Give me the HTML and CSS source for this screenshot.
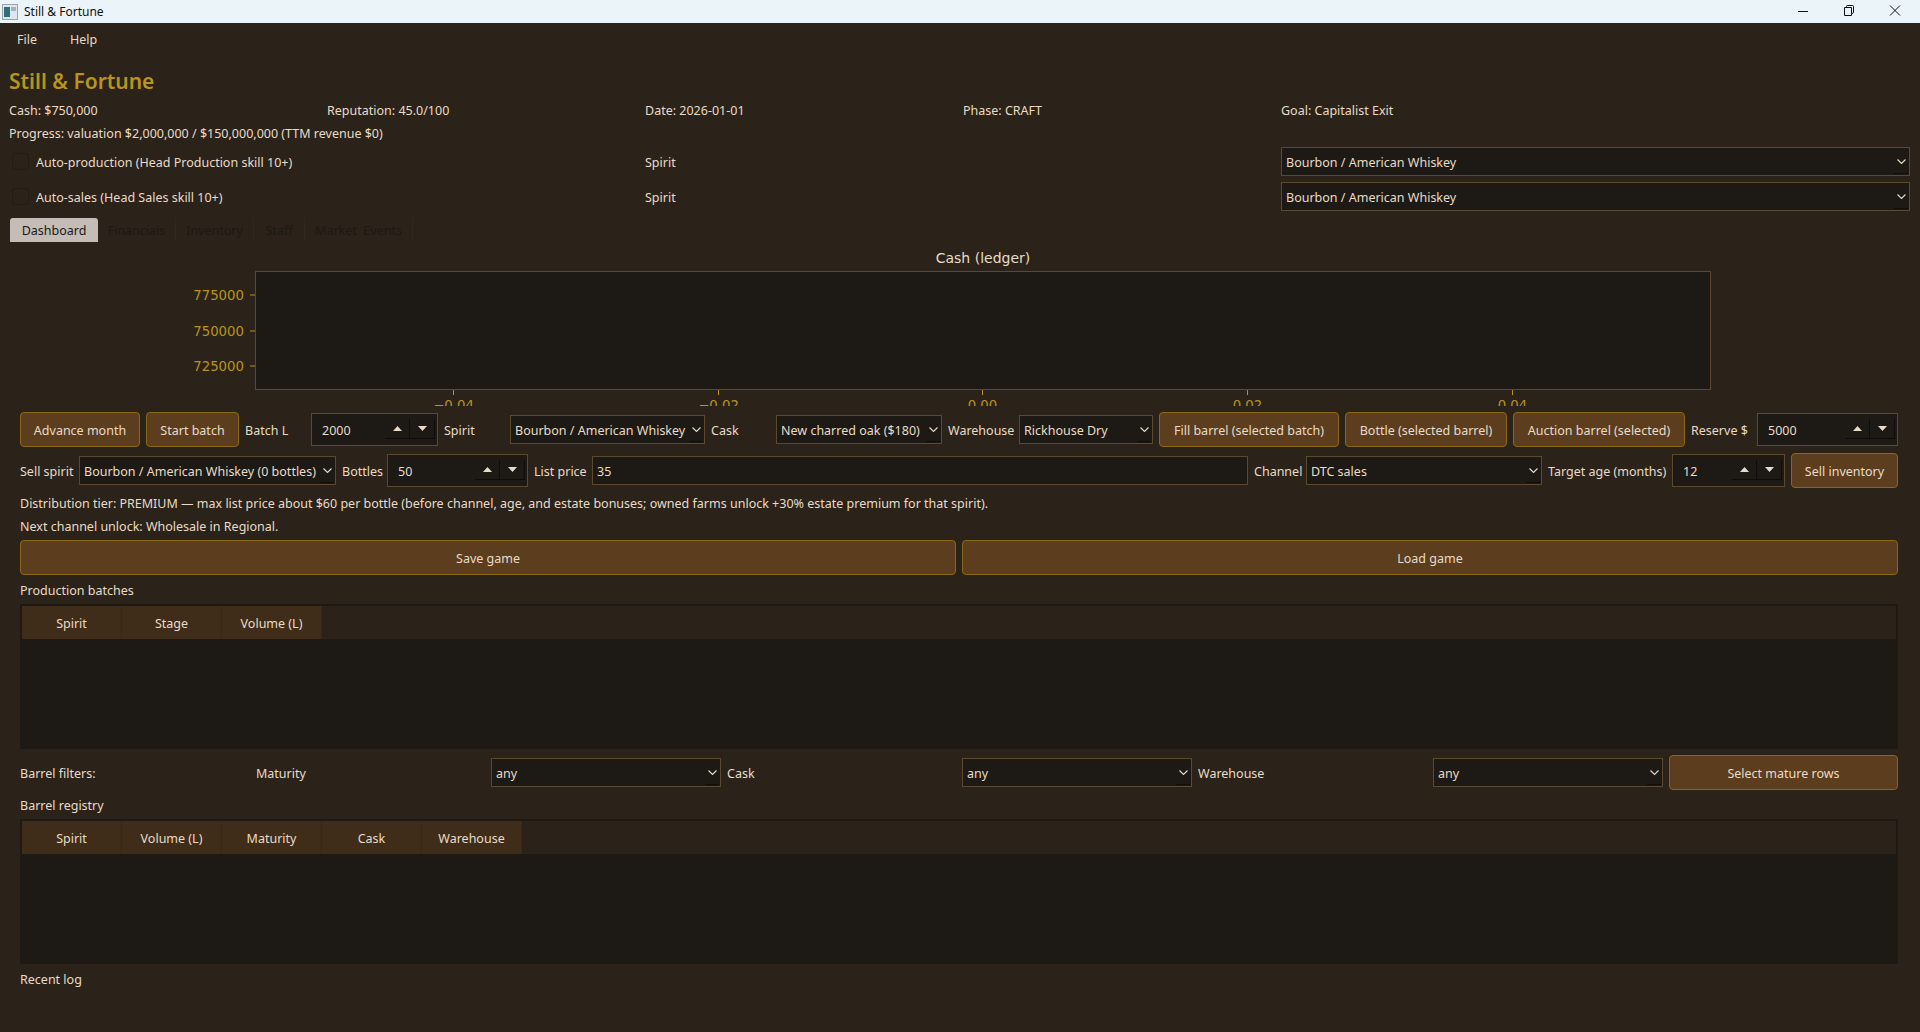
FILE: index.html
```html
<!DOCTYPE html>
<html>
  <head>
    <meta charset="utf-8" />
    <title>Still &amp; Fortune</title>
    <link rel="stylesheet" href="styles.css">
  </head>
  <body>
    <svg class="defs" width="0" height="0">
      <symbol id="chev" viewBox="0 0 9 5"><path d="M.5.5 4.5 4.5 8.5.5" fill="none" stroke="currentColor" stroke-width="1.1" /></symbol>
      <symbol id="up" viewBox="0 0 9 5"><path d="M4.5 0 9 5H0Z" fill="currentColor" /></symbol>
      <symbol id="down" viewBox="0 0 9 5"><path d="M0 0H9L4.5 5Z" fill="currentColor" /></symbol>
    </svg>

    <header class="titlebar">
      <svg class="app-icon" width="16" height="16" viewBox="0 0 16 16">
        <rect x=".5" y=".5" width="15" height="15" fill="#dfe6ea" stroke="#9aa4aa" />
        <rect x="2" y="3" width="6" height="10" fill="#2f6f78" />
        <rect x="9" y="3" width="5" height="4" fill="#9fb6c2" />
      </svg>
      <span class="titlebar-text">Still &amp; Fortune</span>
      <div class="win-buttons">
        <svg width="12" height="12" viewBox="0 0 12 12"><path d="M1 6.5H11" stroke="#111" /></svg>
        <svg width="12" height="12" viewBox="0 0 12 12"><path d="M1.5 2.5H8.5V10.5H1.5ZM3.5 2.5V1.5Q3.5.5 4.5.5H9.5Q10.5.5 10.5 1.5V7.5Q10.5 8.5 8.5 8.5" fill="none" stroke="#111" /></svg>
        <svg width="12" height="12" viewBox="0 0 12 12"><path d="M1 .5 11 10.5M11 .5 1 10.5" stroke="#111" /></svg>
      </div>
    </header>

    <nav class="menubar">
      <span>File</span>
      <span>Help</span>
    </nav>

    <section class="top">
      <h1>Still &amp; Fortune</h1>
      <div class="stats">
        <span>Cash: $750,000</span>
        <span>Reputation: 45.0/100</span>
        <span>Date: 2026-01-01</span>
        <span>Phase: CRAFT</span>
        <span>Goal: Capitalist Exit</span>
      </div>
      <p class="progress">Progress: valuation $2,000,000 / $150,000,000 (TTM revenue $0)</p>
      <div class="auto-row">
        <label class="check"><span class="checkbox"></span>Auto-production (Head Production skill 10+)</label>
        <span class="auto-spirit">Spirit</span>
        <div class="combo auto-combo"><span class="value">Bourbon / American Whiskey</span><span class="arrow"><svg><use href="#chev" /></svg></span></div>
      </div>
      <div class="auto-row">
        <label class="check"><span class="checkbox"></span>Auto-sales (Head Sales skill 10+)</label>
        <span class="auto-spirit">Spirit</span>
        <div class="combo auto-combo"><span class="value">Bourbon / American Whiskey</span><span class="arrow"><svg><use href="#chev" /></svg></span></div>
      </div>
      <div class="tabs">
        <span class="tab active">Dashboard</span>
        <span class="tab tab-financials">Financials</span>
        <span class="tab tab-inventory">Inventory</span>
        <span class="tab tab-staff">Staff</span>
        <span class="tab tab-market">Market&nbsp; Events</span>
      </div>
    </section>

    <main class="page">
      <svg class="chart" width="1878" height="161">
        <text class="chart-title" x="963" y="18" text-anchor="middle">Cash (ledger)</text>
        <rect class="plot" x="235.5" y="26.5" width="1455" height="118" />
        <path class="tick" d="M230 50H235M230 86H235M230 121H235M433.5 145V150M698.5 145V150M962.5 145V150M1227.5 145V150M1492.5 145V150" />
        <text class="tick-label" x="224" y="55" text-anchor="end">775000</text>
        <text class="tick-label" x="224" y="91" text-anchor="end">750000</text>
        <text class="tick-label" x="224" y="126" text-anchor="end">725000</text>
        <text class="tick-label" x="433.5" y="165" text-anchor="middle">−0.04</text>
        <text class="tick-label" x="698.5" y="165" text-anchor="middle">−0.02</text>
        <text class="tick-label" x="962.5" y="165" text-anchor="middle">0.00</text>
        <text class="tick-label" x="1227.5" y="165" text-anchor="middle">0.02</text>
        <text class="tick-label" x="1492.5" y="165" text-anchor="middle">0.04</text>
      </svg>

      <div class="controls controls-batch">
        <button class="btn">Advance month</button>
        <button class="btn">Start batch</button>
        <span>Batch L</span>
        <div class="spin"><span class="value">2000</span><span class="spin-btn"><svg><use href="#up" /></svg></span><span class="spin-btn"><svg><use href="#down" /></svg></span></div>
        <span>Spirit</span>
        <div class="combo"><span class="value">Bourbon / American Whiskey</span><span class="arrow"><svg><use href="#chev" /></svg></span></div>
        <span>Cask</span>
        <div class="combo"><span class="value">New charred oak ($180)</span><span class="arrow"><svg><use href="#chev" /></svg></span></div>
        <span>Warehouse</span>
        <div class="combo"><span class="value">Rickhouse Dry</span><span class="arrow"><svg><use href="#chev" /></svg></span></div>
        <button class="btn">Fill barrel (selected batch)</button>
        <button class="btn">Bottle (selected barrel)</button>
        <button class="btn">Auction barrel (selected)</button>
        <span>Reserve $</span>
        <div class="spin"><span class="value">5000</span><span class="spin-btn"><svg><use href="#up" /></svg></span><span class="spin-btn"><svg><use href="#down" /></svg></span></div>
      </div>

      <div class="controls controls-sell">
        <span>Sell spirit</span>
        <div class="combo"><span class="value">Bourbon / American Whiskey (0 bottles)</span><span class="arrow"><svg><use href="#chev" /></svg></span></div>
        <span>Bottles</span>
        <div class="spin"><span class="value">50</span><span class="spin-btn"><svg><use href="#up" /></svg></span><span class="spin-btn"><svg><use href="#down" /></svg></span></div>
        <span>List price</span>
        <div class="combo"><span class="value">35</span></div>
        <span>Channel</span>
        <div class="combo"><span class="value">DTC sales</span><span class="arrow"><svg><use href="#chev" /></svg></span></div>
        <span>Target age (months)</span>
        <div class="spin"><span class="value">12</span><span class="spin-btn"><svg><use href="#up" /></svg></span><span class="spin-btn"><svg><use href="#down" /></svg></span></div>
        <button class="btn">Sell inventory</button>
      </div>

      <p class="note note-tier">Distribution tier: PREMIUM — max list price about $60 per bottle (before channel, age, and estate bonuses; owned farms unlock +30% estate premium for that spirit).</p>
      <p class="note note-next">Next channel unlock: Wholesale in Regional.</p>

      <div class="save-row">
        <button class="btn">Save game</button>
        <button class="btn">Load game</button>
      </div>

      <p class="section-label label-batches">Production batches</p>
      <div class="table">
        <div class="table-head">
          <span>Spirit</span>
          <span>Stage</span>
          <span>Volume (L)</span>
        </div>
      </div>

      <div class="controls controls-filters">
        <span>Barrel filters:</span>
        <span>Maturity</span>
        <div class="combo"><span class="value">any</span><span class="arrow"><svg><use href="#chev" /></svg></span></div>
        <span>Cask</span>
        <div class="combo"><span class="value">any</span><span class="arrow"><svg><use href="#chev" /></svg></span></div>
        <span>Warehouse</span>
        <div class="combo"><span class="value">any</span><span class="arrow"><svg><use href="#chev" /></svg></span></div>
        <button class="btn">Select mature rows</button>
      </div>

      <p class="section-label label-barrels">Barrel registry</p>
      <div class="table">
        <div class="table-head">
          <span>Spirit</span>
          <span>Volume (L)</span>
          <span>Maturity</span>
          <span>Cask</span>
          <span>Warehouse</span>
        </div>
      </div>

      <p class="section-label label-log">Recent log</p>
    </main>
  </body>
</html>
```

FILE: styles.css
```css
html,
body {
  height: 100%;
}
body {
  margin: 0;
  overflow: hidden;
  background: #2b2219;
  color: #e8dcc8;
  font-family: "Noto Sans", Arial, sans-serif;
  font-size: 12.5px;
  line-height: 18px;
}
p,
h1 {
  margin: 0;
}
.defs {
  display: block;
  height: 0;
}

.titlebar {
  display: flex;
  align-items: center;
  height: 23px;
  background: #ebf4f9;
  color: #111;
  font-size: 12px;
}
.app-icon {
  margin: 0 6px 0 2px;
}
.win-buttons {
  display: flex;
  gap: 34px;
  margin: 0 19px 2px auto;
}

.menubar {
  display: flex;
  gap: 33px;
  height: 34px;
  padding: 8px 0 0 17px;
  box-sizing: border-box;
}

.top {
  padding: 11px 10px 0 9px;
}
h1 {
  height: 27px;
  line-height: 27px;
  color: #b8941f;
  font-size: 21px;
  font-weight: 600;
}
.stats,
.auto-row {
  display: grid;
  grid-template-columns: repeat(4, 312px) 1fr;
  column-gap: 6px;
  align-items: center;
}
.stats {
  height: 23px;
  margin-top: 4px;
}
.progress {
  height: 23px;
  line-height: 23px;
}
.auto-row {
  height: 29px;
  margin-bottom: 6px;
}
.progress + .auto-row {
  margin-top: 2px;
}
.check {
  display: flex;
  align-items: center;
  grid-column: span 2;
  padding-top: 2px;
}
.checkbox {
  width: 15px;
  height: 15px;
  margin: -3px 7px 0 3px;
  border: 1px solid #241c14;
  border-radius: 3px;
}
.auto-combo {
  grid-column: 4 / 6;
  margin-left: 318px;
}
.auto-spirit {
  grid-column: 3;
  padding-top: 2px;
}

.tabs {
  display: flex;
  height: 24px;
  margin: 7px 0 0 1px;
  color: #1d1914;
}
.tab {
  display: flex;
  align-items: center;
  justify-content: center;
  box-sizing: border-box;
  padding-top: 2px;
  border-right: 1px solid #31271d;
}
.tab.active {
  width: 88px;
  background: #c4bcb6;
  border-right: 0;
  border-radius: 3px 3px 0 0;
}
.tab-financials {
  width: 78px;
}
.tab-inventory {
  width: 78px;
}
.tab-staff {
  width: 51px;
}
.tab-market {
  width: 108px;
}

.page {
  padding: 3px 22px 0 20px;
}
.chart {
  display: block;
  overflow: hidden;
  font-family: "DejaVu Sans", sans-serif;
}
.chart-title {
  fill: #e8dcc8;
  font-size: 14px;
}
.plot {
  fill: #1d1914;
  stroke: #5c4a2e;
}
.tick {
  stroke: #b8941f;
  fill: none;
}
.tick-label {
  fill: #b8941f;
  font-size: 13.3px;
}

.controls {
  display: grid;
  column-gap: 6px;
  align-items: center;
  white-space: nowrap;
}
.controls > span {
  padding-top: 2px;
}
.controls-batch {
  height: 35px;
  margin-top: 6px;
  grid-template-columns: 120px 93px 60px 127px 60px 195px 59px 166px 65px 134px 180px 162px 172px 60px 141px;
}
.controls-sell {
  height: 35px;
  margin-top: 6px;
  grid-template-columns: 53px 257px 39px 141px 52px 656px 46px 236px 118px 113px 107px;
}
.controls-filters {
  height: 35px;
  margin-top: 6px;
  grid-template-columns: 230px 229px 230px 229px 230px 229px 230px 229px;
}

.btn {
  height: 35px;
  padding: 2px 0 0;
  background: #5c3d1e;
  border: 1px solid #8b6914;
  border-radius: 4px;
  color: #e8dcc8;
  font: inherit;
}

.combo,
.spin {
  display: flex;
  align-items: center;
  box-sizing: border-box;
  background: #1d1914;
  border: 1px solid #5c4a2e;
}
.combo {
  height: 29px;
}
.spin {
  height: 33px;
  padding-right: 2px;
}
.value {
  flex: 1;
  padding: 2px 0 0 4px;
  overflow: hidden;
}
.spin .value {
  padding-left: 10px;
}
.arrow {
  display: flex;
  align-items: center;
  justify-content: center;
  width: 14px;
  height: 25px;
  margin-right: 1px;
  border-bottom: 1px solid #0f0c09;
  box-sizing: border-box;
}
.arrow svg {
  width: 9px;
  height: 5px;
}
.spin-btn {
  display: flex;
  align-items: center;
  justify-content: center;
  width: 25px;
  height: 20px;
  box-sizing: border-box;
  border-right: 1px solid #0f0c09;
  border-bottom: 1px solid #0f0c09;
  margin-top: -2px;
}
.spin-btn svg {
  width: 9px;
  height: 5px;
}

.note-tier {
  margin-top: 4px;
  height: 23px;
  line-height: 23px;
}
.note-next {
  height: 23px;
  line-height: 23px;
}
.save-row {
  display: grid;
  grid-template-columns: 936px 1fr;
  column-gap: 6px;
  margin-top: 2px;
}

.section-label {
  height: 29px;
  line-height: 32px;
}
.table {
  box-sizing: border-box;
  height: 145px;
  border: 2px solid #1d1914;
  background: #1d1914;
}
.table-head {
  display: flex;
  height: 33px;
  background: #2b2219;
}
.table-head span {
  display: flex;
  align-items: center;
  justify-content: center;
  box-sizing: border-box;
  width: 100px;
  padding-top: 2px;
  background: #3f2d1a;
  border-right: 1px solid #382815;
}
```
